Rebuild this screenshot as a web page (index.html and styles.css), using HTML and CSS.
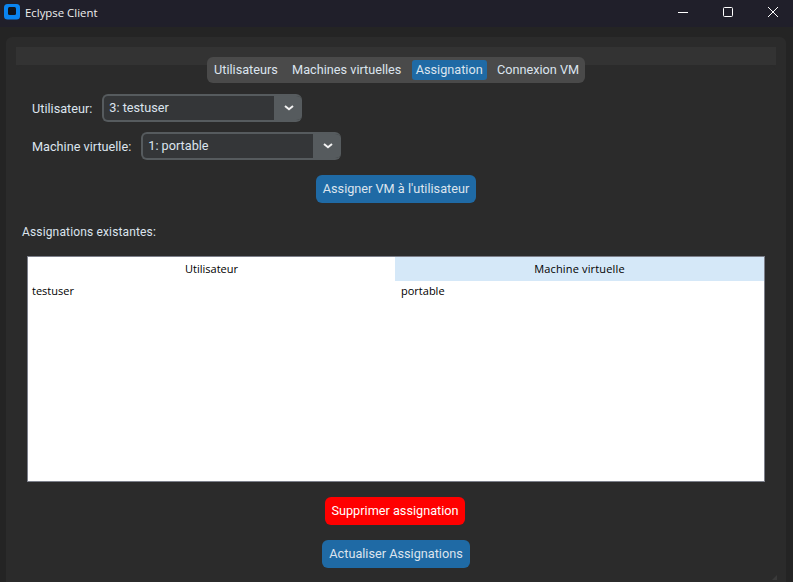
FILE: index.html
```html
<!DOCTYPE html>
<html lang="fr">
<head>
<meta charset="utf-8">
<title>Eclypse Client</title>
<link rel="stylesheet" href="styles.css">
</head>
<body>
<header class="titlebar">
  <svg class="logo" width="16" height="16" viewBox="0 0 16 16"><rect width="16" height="15.5" rx="3.5" fill="#0a84f0"/><rect x="4" y="3" width="8" height="8" rx="1.5" fill="#10141c"/></svg>
  <span class="app-title">Eclypse Client</span>
  <div class="win-controls">
    <svg width="10" height="10" viewBox="0 0 10 10"><path d="M0 5.5H10" stroke="#fff" stroke-width="1"/></svg>
    <svg width="10" height="10" viewBox="0 0 10 10"><rect x=".5" y=".5" width="9" height="9" rx="1" fill="none" stroke="#fff" stroke-width="1"/></svg>
    <svg width="10" height="10" viewBox="0 0 10 10"><path d="M0 0L10 10M10 0L0 10" stroke="#fff" stroke-width="1"/></svg>
  </div>
</header>
<main class="frame">
  <div class="strip"></div>
  <section class="tabview">
    <nav class="tabs">
      <span class="tab">Utilisateurs</span>
      <span class="tab">Machines virtuelles</span>
      <span class="tab active">Assignation</span>
      <span class="tab">Connexion VM</span>
    </nav>
    <div class="field field-user">
      <label class="field-label">Utilisateur:</label>
      <div class="combo">
        <span class="combo-value">3: testuser</span>
        <span class="combo-btn"><svg width="10" height="6" viewBox="0 0 10 6"><path d="M1 1L5 4.3L9 1" fill="none" stroke="#f2f2f2" stroke-width="2"/></svg></span>
      </div>
    </div>
    <div class="field field-vm">
      <label class="field-label">Machine virtuelle:</label>
      <div class="combo">
        <span class="combo-value">1: portable</span>
        <span class="combo-btn"><svg width="10" height="6" viewBox="0 0 10 6"><path d="M1 1L5 4.3L9 1" fill="none" stroke="#f2f2f2" stroke-width="2"/></svg></span>
      </div>
    </div>
    <div class="center assign-row"><button class="btn blue btn-assign">Assigner VM à l'utilisateur</button></div>
    <p class="section-label">Assignations existantes:</p>
    <div class="table">
      <div class="thead">
        <div class="th">Utilisateur</div>
        <div class="th th-sel">Machine virtuelle</div>
      </div>
      <div class="tr">
        <div class="td">testuser</div>
        <div class="td td-second">portable</div>
      </div>
    </div>
    <div class="center delete-row"><button class="btn red btn-delete">Supprimer assignation</button></div>
    <div class="center refresh-row"><button class="btn blue btn-refresh">Actualiser Assignations</button></div>
  </section>
</main>
<svg class="grip" width="5" height="5" viewBox="0 0 5 5"><path d="M5 0V5H0Z" fill="#3a3a3a"/></svg>
</body>
</html>
```
FILE: styles.css
```css
* { box-sizing: border-box; }
html, body { margin: 0; height: 100%; }
body {
  width: 793px; height: 582px; overflow: hidden;
  background: #242424;
  color: #dce4ee;
  font-family: Roboto, sans-serif;
  font-size: 12.7px;
  position: relative;
}
.titlebar {
  height: 27px; background: #201f2a;
  display: flex; align-items: center;
  padding: 0 0 3px 4px; color: #eee;
  font-family: "Open Sans", sans-serif; font-size: 11.4px;
}
.logo { flex: none; }
.app-title { margin-left: 5px; }
.win-controls {
  margin-left: auto; display: flex; gap: 35px; padding-right: 15px;
  align-items: center;
}
.win-controls svg { display: block; }
.frame {
  margin: 10px 7px 0 6px;
  height: 545px;
  background: #2b2b2b;
  border-radius: 6px 6px 0 0;
  padding: 10px 10px 0;
}
.strip { height: 18px; background: #333; }
.tabview { display: flow-root; height: 517px; background: #2b2b2b; border-radius: 6px 6px 0 0; }
.tabs {
  width: 378px; height: 26px;
  margin: -8px 0 0 191px;
  background: #4a4a4a; border-radius: 6px;
  display: flex; align-items: center; justify-content: flex-start; gap: 6.3px;
  padding: 0 3px;
  position: relative;
}
.tab { padding: 0 4px; height: 20px; line-height: 20px; border-radius: 3px; white-space: nowrap; }
.active { background: #1f6aa5; }
.field { display: flex; align-items: center; }
.field-user { margin: 11px 0 0 16px; }
.field-vm { margin: 10px 0 0 16px; }
.field-label { margin-right: 10px; }
.combo {
  width: 200px; height: 28px; display: flex;
  background: #343638;
  border: 2px solid #565b5e;
  border-right-width: 0;
  border-radius: 6px; overflow: hidden;
}
.combo-value { flex: 1; padding-left: 5px; line-height: 23px; }
.combo-btn {
  width: 28px; background: #565b5e; padding-left: 1px;
  display: flex; align-items: center; justify-content: center;
}
.center { display: flex; justify-content: center; }
.assign-row { margin-top: 15px; }
.btn {
  height: 28px; border: 0; border-radius: 6px;
  font: inherit; color: #dce4ee; padding: 0 0 2px;
}
.blue { background: #1f6aa5; }
.red { background: #ff0000; color: #fff; }
.btn-assign { width: 160px; }
.btn-delete { width: 140px; }
.btn-refresh { width: 148px; }
.section-label { margin: 22px 0 0 6px; line-height: 15px; font-size: 12px; letter-spacing: .15px; }
.table {
  width: 738px; height: 226px; margin: 16px 0 0 11px;
  background: #fff; border: 1px solid #7c7f8a;
  color: #000; font-family: "Open Sans", sans-serif; font-size: 11px;
}
.thead, .tr { display: grid; grid-template-columns: 367px 369px; }
.th { height: 24px; line-height: 24px; text-align: center; }
.th-sel { background: #d5e8f8; letter-spacing: .15px; }
.td { height: 20px; line-height: 20px; padding-left: 4px; }
.td-second { padding-left: 6px; }
.delete-row { margin-top: 15px; padding-right: 2px; }
.refresh-row { margin-top: 15px; }
.grip { position: absolute; left: 772px; top: 575px; }
```
